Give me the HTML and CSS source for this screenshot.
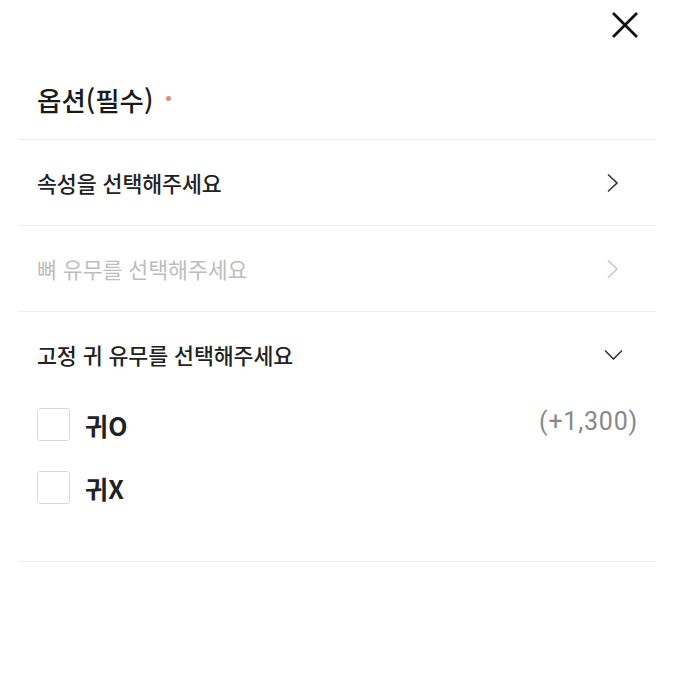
FILE: index.html
```html
<!DOCTYPE html>
<html lang="ko">
<head>
<meta charset="utf-8">
<link rel="stylesheet" href="styles.css">
</head>
<body>
<div class="sheet">
  <div class="topbar">
    <svg class="close" width="28" height="28" viewBox="0 0 28 28"><path d="M2 2 L26 26 M26 2 L2 26" stroke="#111" stroke-width="2.8" fill="none"/></svg>
  </div>
  <div class="title-row">
    <span class="title">옵션(필수)</span><span class="req"></span>
  </div>
  <div class="row">
    <span class="row-text">속성을 선택해주세요</span>
    <svg class="chev" width="13" height="20" viewBox="0 0 13 20"><path d="M2 1.5 L11 10 L2 18.5" stroke="#333" stroke-width="1.6" fill="none"/></svg>
  </div>
  <div class="row">
    <span class="row-text disabled">뼈 유무를 선택해주세요</span>
    <svg class="chev" width="13" height="20" viewBox="0 0 13 20"><path d="M2 1.5 L11 10 L2 18.5" stroke="#c8c8c8" stroke-width="1.6" fill="none"/></svg>
  </div>
  <div class="section">
    <div class="section-head">
      <span class="row-text">고정 귀 유무를 선택해주세요</span>
      <svg class="chev-down" width="19" height="11" viewBox="0 0 19 11"><path d="M1 1.5 L9.5 10 L18 1.5" stroke="#333" stroke-width="1.6" fill="none"/></svg>
    </div>
    <div class="options">
      <div class="option">
        <span class="box"></span>
        <span class="opt-label">귀O</span>
        <span class="price">(+1,300)</span>
      </div>
      <div class="option">
        <span class="box"></span>
        <span class="opt-label">귀X</span>
      </div>
    </div>
  </div>
</div>
</body>
</html>
```
FILE: styles.css
```css
html, body {
  margin: 0;
  padding: 0;
  background: #fff;
}
body {
  font-family: "Noto Sans CJK KR", "Noto Sans", sans-serif;
  color: #222;
}
.sheet {
  width: 638px;
  margin: 0 0 0 18px;
}
.topbar {
  height: 50px;
  display: flex;
  justify-content: flex-end;
  padding-right: 17px;
  box-sizing: border-box;
}
.close {
  margin-top: 11px;
}
.title-row {
  height: 90px;
  box-sizing: border-box;
  padding: 10px 19px 0;
  display: flex;
  align-items: center;
  border-bottom: 1.5px solid #ececec;
}
.title {
  font-size: 26.5px;
  font-weight: 500;
  letter-spacing: 0;
  color: #1a1a1a;
}
.req {
  width: 5px;
  height: 5px;
  border-radius: 50%;
  background: #e08a70;
  margin-left: 13px;
  margin-top: -2px;
}
.row {
  height: 86px;
  box-sizing: border-box;
  padding: 0 37px 0 19px;
  display: flex;
  align-items: center;
  justify-content: space-between;
  border-bottom: 1.5px solid #ececec;
}
.row-text {
  font-size: 21.7px;
  font-weight: 500;
  letter-spacing: -0.1px;
  color: #222;
}
.row-text.disabled {
  color: #bdbdbd;
  font-weight: 400;
}
.section {
  border-bottom: 1.5px solid #ececec;
}
.section-head {
  height: 84px;
  padding: 0 33px 0 19px;
  display: flex;
  align-items: center;
  justify-content: space-between;
}
.options {
  padding: 12px 18px 57px 19px;
  display: flex;
  flex-direction: column;
  gap: 30px;
}
.option {
  height: 33px;
  display: flex;
  align-items: center;
}
.box {
  width: 31px;
  height: 31px;
  border: 1.5px solid #d9d9d9;
  border-radius: 3px;
  flex: none;
}
.opt-label {
  margin-left: 15px;
  font-size: 25px;
  font-weight: 700;
  color: #222;
  letter-spacing: 0.3px;
}
.price {
  margin-left: auto;
  font-family: Roboto, "Noto Sans CJK KR", sans-serif;
  font-size: 25px;
  font-weight: 400;
  color: #888;
  letter-spacing: 0.8px;
  margin-top: -6px;
}
```
